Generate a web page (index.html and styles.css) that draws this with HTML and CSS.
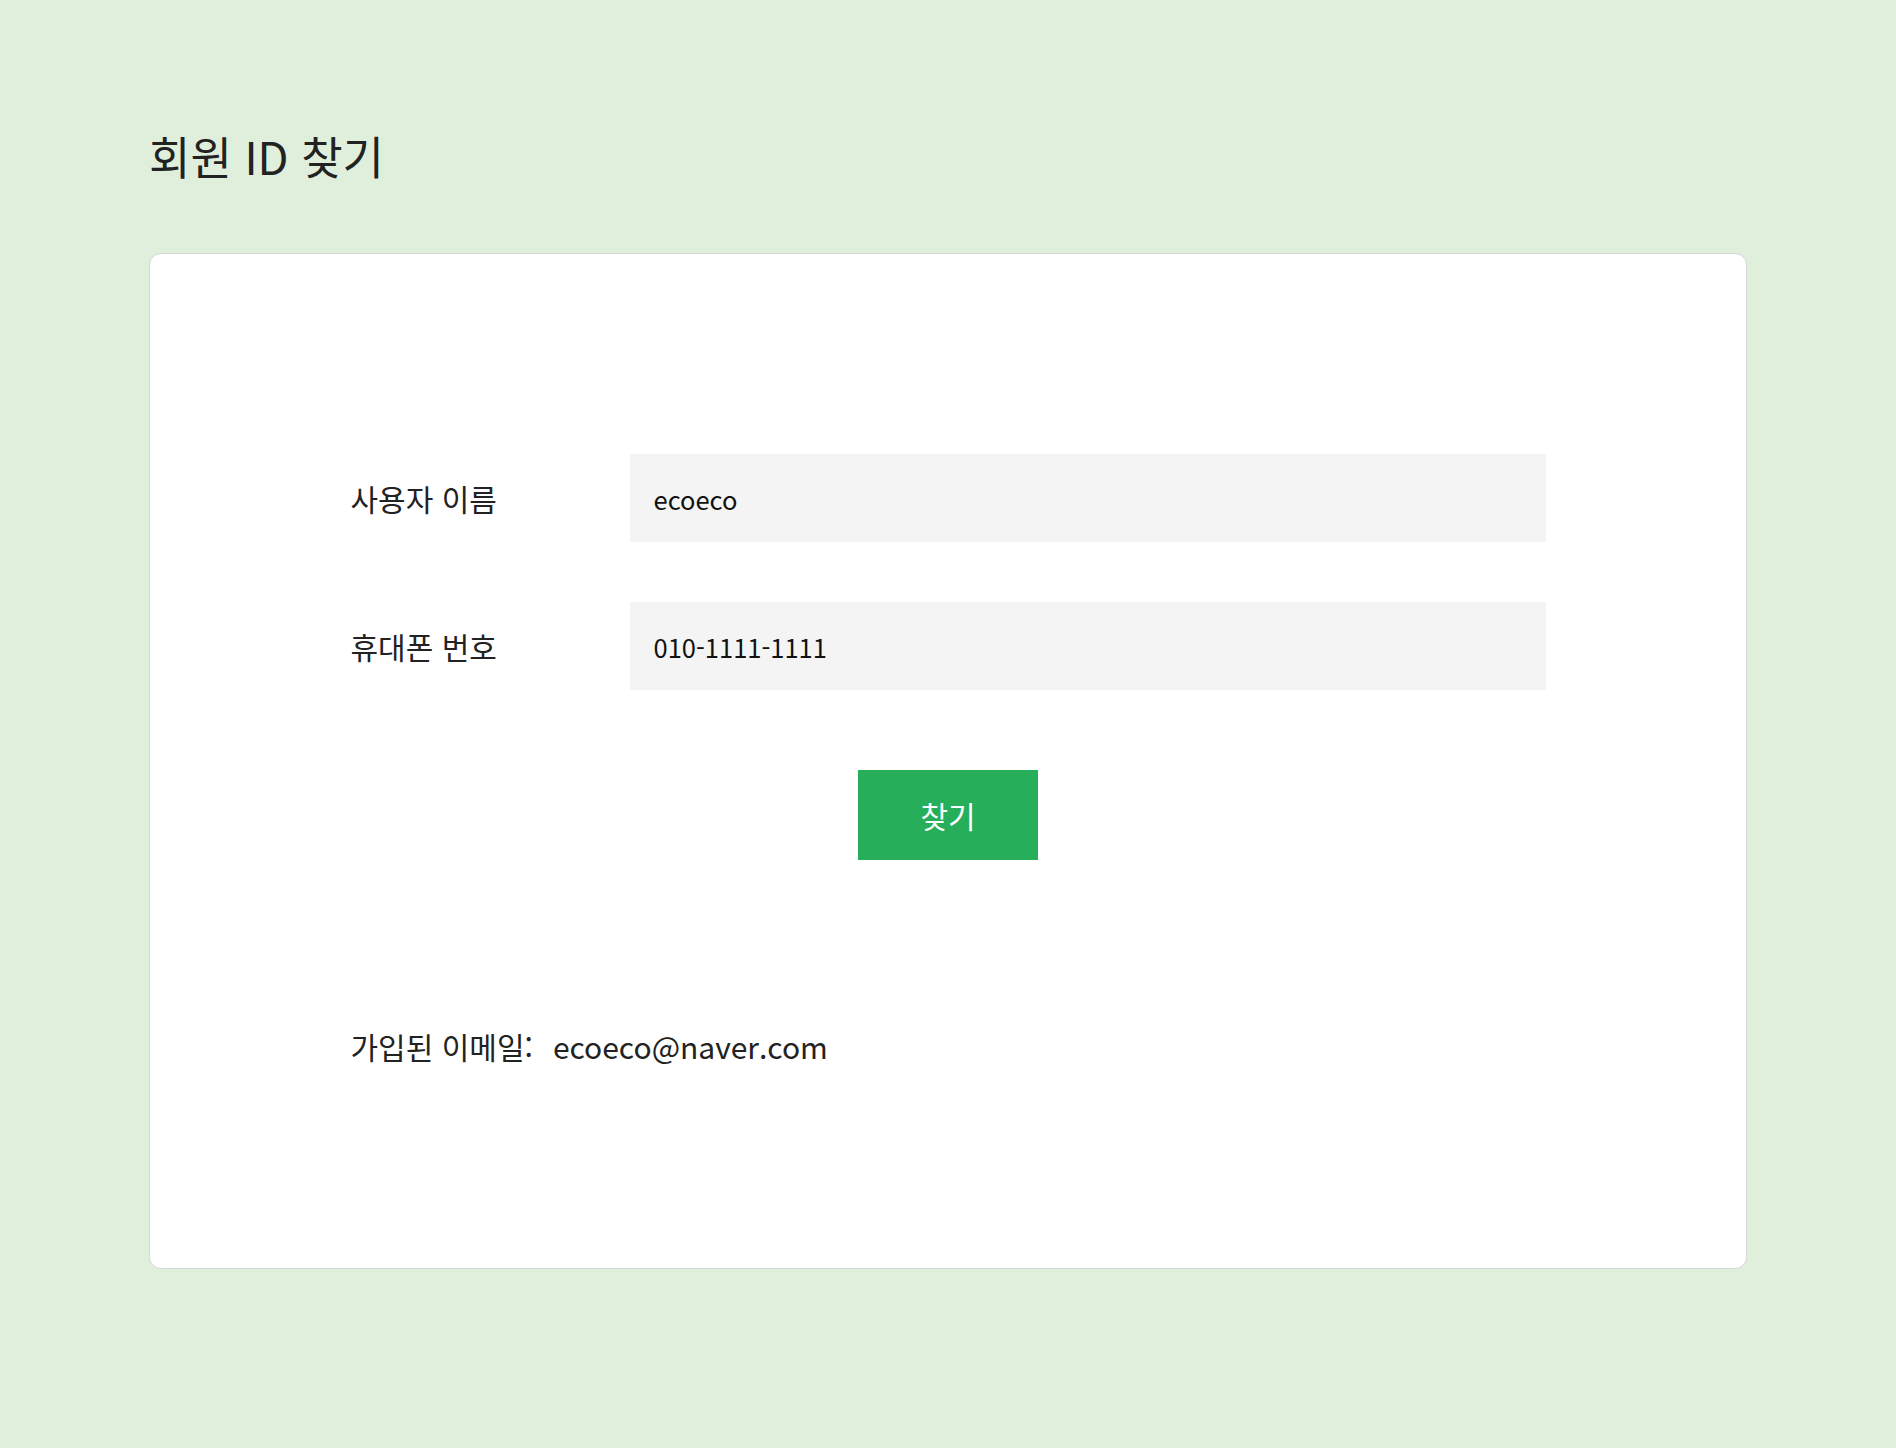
FILE: index.html
```html
<!DOCTYPE html>
<html lang="ko">
<head>
<meta charset="utf-8">
<title>회원 ID 찾기</title>
<link rel="stylesheet" href="styles.css">
</head>
<body>
<div class="page">
  <h1 class="title">회원 ID 찾기</h1>
  <div class="card">
    <form class="form">
      <div class="row">
        <label class="label">사용자 이름</label>
        <div class="input">ecoeco</div>
      </div>
      <div class="row">
        <label class="label">휴대폰 번호</label>
        <div class="input">010-1111-1111</div>
      </div>
      <div class="actions">
        <button type="button" class="btn">찾기</button>
      </div>
      <div class="result">
        <span class="result-label">가입된 이메일:</span>
        <span class="result-value">ecoeco@naver.com</span>
      </div>
    </form>
  </div>
</div>
</body>
</html>
```

FILE: styles.css
```css
* { box-sizing: border-box; }
html, body { margin: 0; padding: 0; }
body {
  background: #e0efdc;
  font-family: "Noto Sans CJK KR", "Noto Sans", sans-serif;
  color: #222;
}
.page {
  padding: 126px 149px 0;
}
.title {
  margin: 0;
  font-size: 45px;
  font-weight: 400;
  line-height: 60px;
  color: #222;
}
.card {
  margin-top: 67px;
  height: 1016px;
  background: #fff;
  border: 1px solid #d6d6d6;
  border-radius: 12px;
  padding-top: 200px;
}
.form {
  width: 1195px;
  margin: 0 auto;
  display: flex;
  flex-direction: column;
}
.row {
  display: flex;
  align-items: center;
  height: 88px;
}
.row + .row { margin-top: 60px; }
.label {
  width: 279px;
  font-size: 30px;
  color: #222;
}
.input {
  flex: 1;
  height: 88px;
  background: #f4f4f4;
  padding-left: 24px;
  display: flex;
  align-items: center;
  font-size: 25.5px;
  color: #111;
}
.actions {
  margin-top: 80px;
  display: flex;
  justify-content: center;
}
.btn {
  width: 180px;
  height: 90px;
  border: 0;
  background: #27ae5a;
  color: #fff;
  font-family: inherit;
  font-size: 30px;
}
.result {
  margin-top: 166px;
  line-height: 40px;
  display: flex;
  align-items: baseline;
}
.result-label { font-size: 30px; margin-right: 20px; }
.result-value { font-size: 30px; }
```
